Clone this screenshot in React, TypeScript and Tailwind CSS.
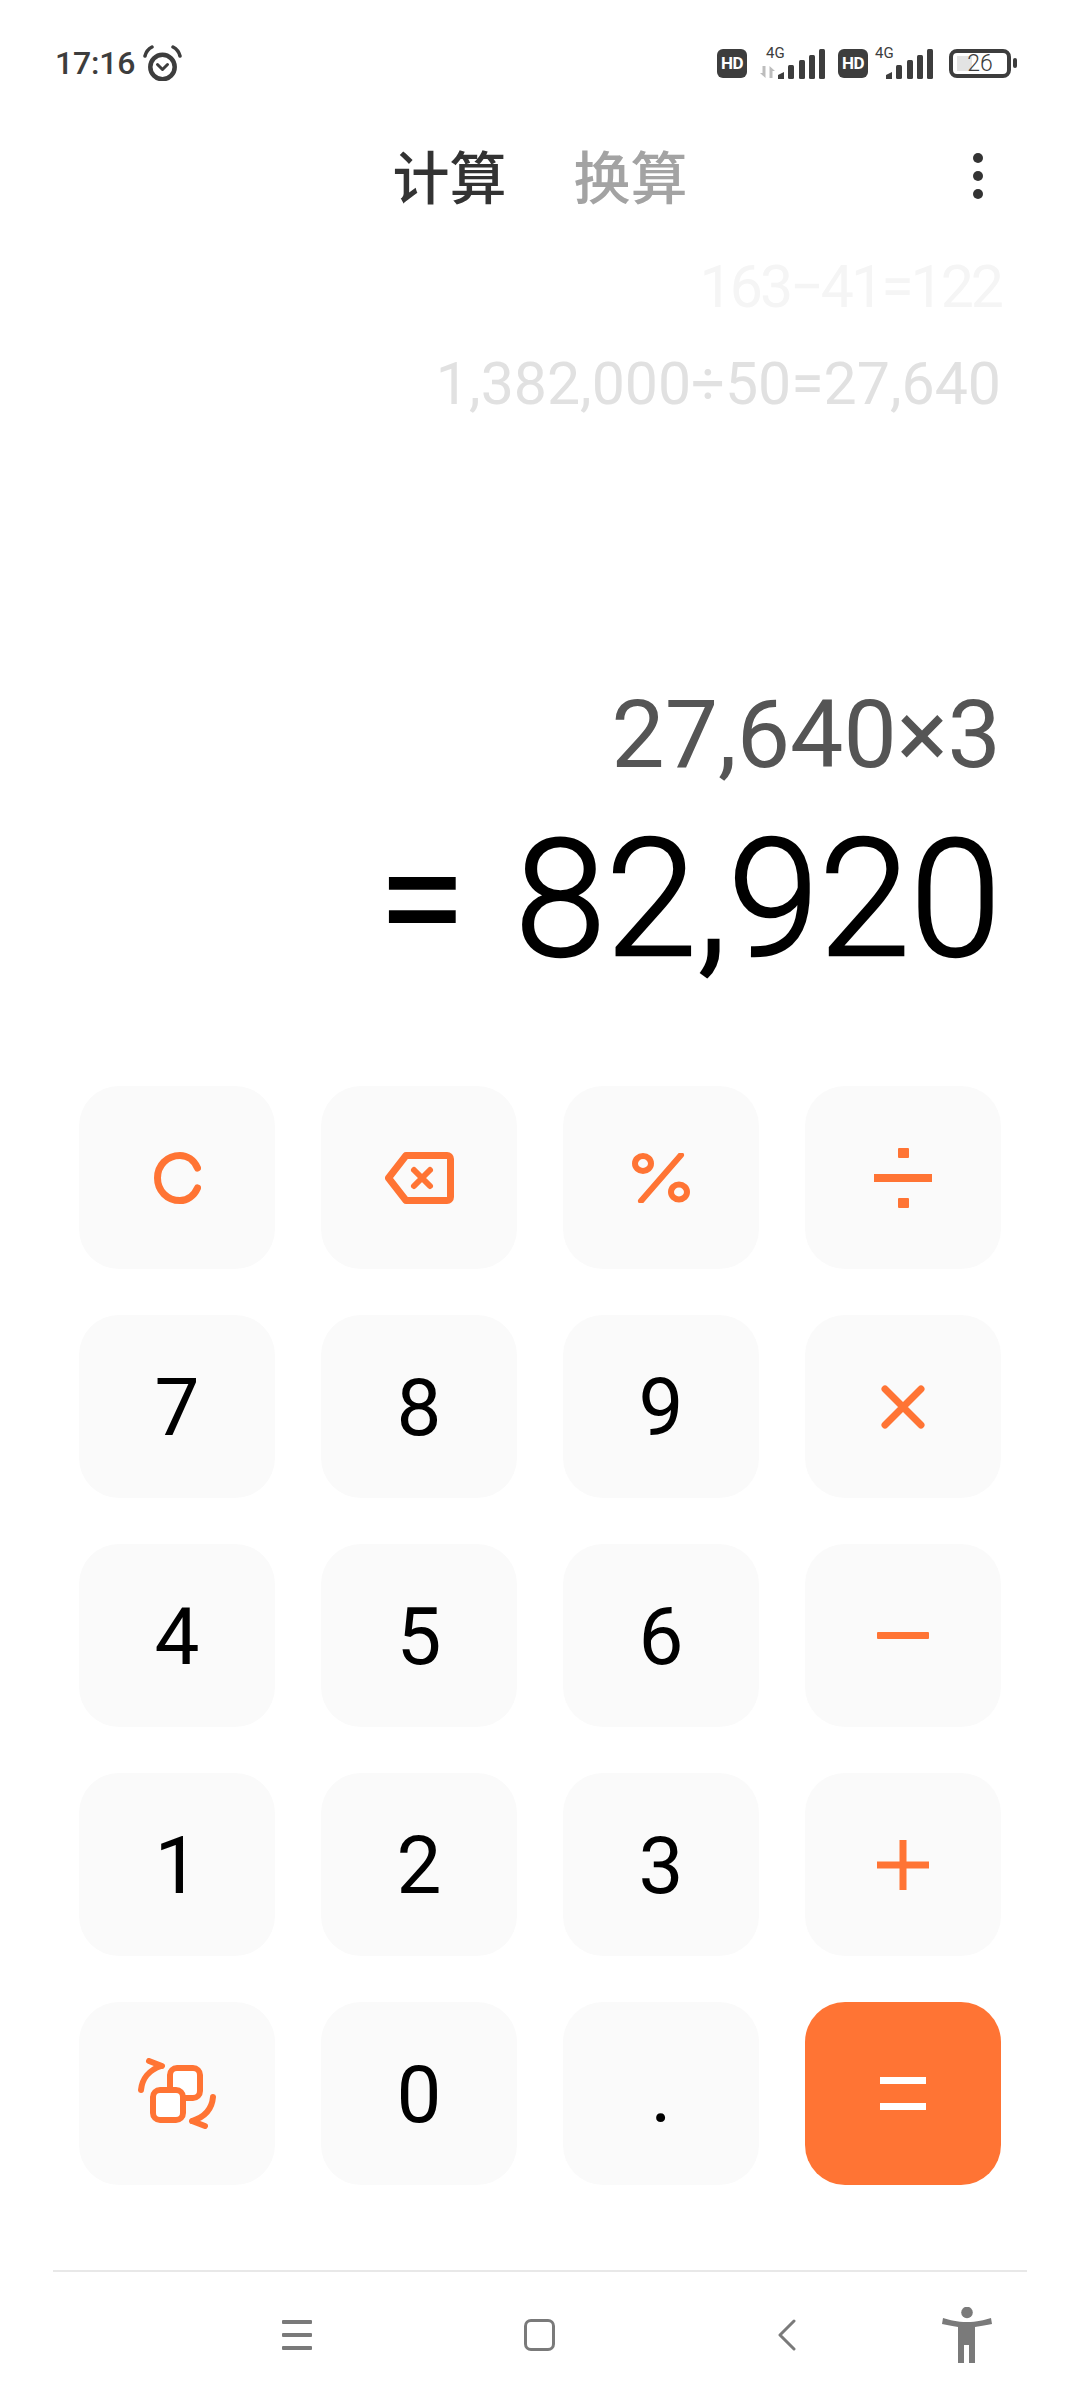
import React from "react";

const orange = "#ff7434";

function Key({ children, accent }: { children: React.ReactNode; accent?: boolean }) {
  return (
    <div className={`flex h-[183px] items-center justify-center rounded-[40px] ${accent ? "bg-[#ff7434]" : "bg-[#fafafa]"}`}>
      {children}
    </div>
  );
}

function Digit({ t }: { t: string }) {
  return <span className="pt-[3px] text-[80px] leading-none text-black">{t}</span>;
}

function Signal() {
  return (
    <svg width="48" height="31" viewBox="0 0 48 31" fill="#3d3d3d">
      <path d="M0 31v-4l6-3v7z" />
      <rect x="10" y="17" width="6" height="14" rx="1.5" />
      <rect x="21" y="12" width="6" height="19" rx="1.5" />
      <rect x="31" y="7" width="6" height="24" rx="1.5" />
      <rect x="41" y="1" width="6" height="30" rx="1.5" />
    </svg>
  );
}

function Hd() {
  return (
    <div className="flex h-[29px] w-[30px] items-center justify-center rounded-[6px] bg-[#3d3d3d] text-[17px] font-bold leading-none tracking-[-0.5px] text-white">HD</div>
  );
}

export default function App() {
  return (
    <div className="flex h-[2400px] w-[1080px] flex-col overflow-hidden bg-white font-['Roboto','Noto_Sans_CJK_SC',sans-serif]">
      {/* status bar */}
      <div className="flex h-[124px] items-start justify-between pl-[55px] pr-[63px] pt-[43px]">
        <div className="flex h-[40px] items-center gap-[8px] text-[#3d3d3d]">
          <span className="text-[32px] font-medium leading-[40px] tracking-[-0.2px]">17:16</span>
          <svg width="40" height="36" viewBox="0 0 40 36" fill="none" stroke="#3d3d3d" strokeWidth="4.5">
            <circle cx="19.5" cy="22" r="12.2" />
            <path d="M14.5 19.5l5 5 5-5" strokeWidth="3" strokeLinecap="round" strokeLinejoin="round" />
            <path d="M2 11C3 7 5 4 9 2M37 11C36 7 34 4 30 2" strokeWidth="3.5" strokeLinecap="round" />
          </svg>
        </div>
        <div className="flex h-[40px] items-center">
          <Hd />
          <div className="relative ml-[13px] h-[40px] w-[66px]">
            <span className="absolute left-[6px] top-0 text-[15px] leading-[20px] text-[#3d3d3d]">4G</span>
            <svg className="absolute bottom-[5px] left-0" width="15" height="12" viewBox="0 0 15 12" fill="#bdbdbd">
              <path d="M0 7h2.5V0h3v12zM9.5 0l5.5 5h-2.5v7h-3z" />
            </svg>
            <div className="absolute bottom-[4px] right-0">
              <Signal />
            </div>
          </div>
          <div className="ml-[12px]"><Hd /></div>
          <div className="relative h-[40px] w-[66px]">
            <span className="absolute left-[7px] top-0 text-[15px] leading-[20px] text-[#3d3d3d]">4G</span>
            <div className="absolute bottom-[4px] right-0"><Signal /></div>
          </div>
          <div className="relative ml-[15px] flex h-[29px] w-[62px] items-center justify-center rounded-[8px] border-[4px] border-[#3d3d3d]">
            <div className="absolute bottom-[3px] left-[4px] top-[3px] w-[15px] bg-[#e3e3e3]" />
            <span className="relative text-[23px] font-light leading-none text-[#3d3d3d]">26</span>
          </div>
          <div className="ml-[2px] h-[10px] w-[4px] rounded-[2px] bg-[#3d3d3d]" />
        </div>
      </div>

      {/* tabs */}
      <div className="relative flex h-[108px] shrink-0 items-start justify-center">
        <div className="flex gap-[67px] pt-[2px] text-[57px] font-medium leading-[108px]">
          <span className="text-[#333333]">计算</span>
          <span className="text-[#a3a3a3]">换算</span>
        </div>
        <div className="absolute right-[97px] top-[29px] flex flex-col gap-[8px]">
          <div className="h-[10px] w-[10px] rounded-full bg-[#333333]" />
          <div className="h-[10px] w-[10px] rounded-full bg-[#333333]" />
          <div className="h-[10px] w-[10px] rounded-full bg-[#333333]" />
        </div>
      </div>

      {/* history */}
      <div className="mt-[22px] flex flex-col items-end pr-[79px]">
        <div className="text-[59px] leading-[66px] tracking-[-3px] text-[#f5f5f5]">163−41=122</div>
        <div className="mt-[31px] text-[59px] leading-[66px] text-[#e1e1e1]">1,382,000÷50=27,640</div>
      </div>

      {/* expression */}
      <div className="mt-[264px] flex flex-col items-end pr-[79px]">
        <div className="text-[95px] leading-[108px] text-[#555555]">27,640×3</div>
        <div className="mt-[18px] flex items-baseline gap-[48px] text-[164px] font-light leading-[184px] text-black [-webkit-text-stroke:2.5px_#000]">
          <span className="font-normal [-webkit-text-stroke:0]">=</span>
          <span>82,920</span>
        </div>
      </div>

      {/* keypad */}
      <div className="mt-[95px] grid grid-cols-4 gap-x-[46px] gap-y-[46px] px-[79px]">
        <Key>
          <svg width="47" height="52" viewBox="0 0 47 52" fill="none" stroke={orange} strokeWidth="7" strokeLinecap="round">
            <path d="M43.5 16C40 8 33 3.5 26 3.5 13 3.5 3.5 13.5 3.5 26s9.5 22.5 22.5 22.5c7 0 14-4.5 17.5-12.5" />
          </svg>
        </Key>
        <Key>
          <svg width="69" height="52" viewBox="0 0 69 52" fill="none" stroke={orange} strokeWidth="7" strokeLinejoin="round">
            <path d="M21 3.5H62a3.5 3.5 0 0 1 3.5 3.5V45a3.5 3.5 0 0 1-3.5 3.5H21L3.5 26Z" />
            <path d="M29 18l16 16M45 18L29 34" strokeWidth="6" strokeLinecap="round" />
          </svg>
        </Key>
        <Key>
          <svg width="58" height="50" viewBox="0 0 58 50" fill="none" stroke={orange} strokeWidth="6">
            <ellipse cx="11" cy="10.5" rx="8" ry="7.5" />
            <ellipse cx="47" cy="39" rx="8" ry="7.5" />
            <path d="M49 2L9 48" strokeLinecap="round" />
          </svg>
        </Key>
        <Key>
          <svg width="58" height="60" viewBox="0 0 58 60" fill={orange}>
            <rect x="0" y="26" width="58" height="8" />
            <rect x="24" y="0" width="11" height="10" rx="1" />
            <rect x="24" y="50" width="11" height="10" rx="1" />
          </svg>
        </Key>

        <Key><Digit t="7" /></Key>
        <Key><Digit t="8" /></Key>
        <Key><Digit t="9" /></Key>
        <Key>
          <svg width="44" height="44" viewBox="0 0 44 44" stroke={orange} strokeWidth="7" strokeLinecap="round">
            <path d="M4 4l36 36M40 4L4 40" />
          </svg>
        </Key>

        <Key><Digit t="4" /></Key>
        <Key><Digit t="5" /></Key>
        <Key><Digit t="6" /></Key>
        <Key><div className="h-[7px] w-[52px] rounded-[1px] bg-[#ff7434]" /></Key>

        <Key><Digit t="1" /></Key>
        <Key><Digit t="2" /></Key>
        <Key><Digit t="3" /></Key>
        <Key>
          <svg width="52" height="50" viewBox="0 0 52 50" stroke={orange} strokeWidth="7">
            <path d="M0 25h52M26 0v50" />
          </svg>
        </Key>

        <Key>
          <svg width="78" height="71" viewBox="0 0 78 71" fill="none" stroke={orange} strokeWidth="6" strokeLinecap="round" strokeLinejoin="round">
            <rect x="32" y="10" width="30" height="30" rx="7" fill="#fff" />
            <rect x="15" y="32" width="30" height="30" rx="7" fill="#fff" />
            <path d="M3 32C4 21 11 12 23 8M11 3l13 5M75 39c-1 12-8 20-21 24M67 68l-13-5" />
          </svg>
        </Key>
        <Key><Digit t="0" /></Key>
        <Key><Digit t="." /></Key>
        <Key accent>
          <div className="flex flex-col gap-[19px]">
            <div className="h-[7px] w-[46px] bg-white" />
            <div className="h-[7px] w-[46px] bg-white" />
          </div>
        </Key>
      </div>

      {/* navigation */}
      <div className="mx-[53px] mt-[85px] flex h-[128px] items-center border-t-2 border-[#e8e8e8] pl-[229px]">
        <div className="flex w-[30px] flex-col gap-[9px]">
          <div className="h-[4px] rounded-[1px] bg-[#7a7a7a]" />
          <div className="h-[4px] rounded-[1px] bg-[#7a7a7a]" />
          <div className="h-[4px] rounded-[1px] bg-[#7a7a7a]" />
        </div>
        <div className="ml-[212px] h-[32px] w-[31px] rounded-[7px] border-[3px] border-[#7a7a7a]" />
        <svg className="ml-[223px]" width="18" height="32" viewBox="0 0 18 32" fill="none" stroke="#7a7a7a" strokeWidth="3" strokeLinecap="round" strokeLinejoin="round">
          <path d="M16 2L2 16l14 14" />
        </svg>
        <svg className="ml-[146px]" width="50" height="56" viewBox="0 0 50 56" fill="#7a7a7a">
          <circle cx="25" cy="5.5" r="5.8" />
          <path d="M1 11c7 2 14 4 24 4s17-2 24-4l1 6c-5 1-11 2-17 3v36h-6V38h-5v18h-6V20c-6-1-11-2-16-3z" />
        </svg>
      </div>
    </div>
  );
}
